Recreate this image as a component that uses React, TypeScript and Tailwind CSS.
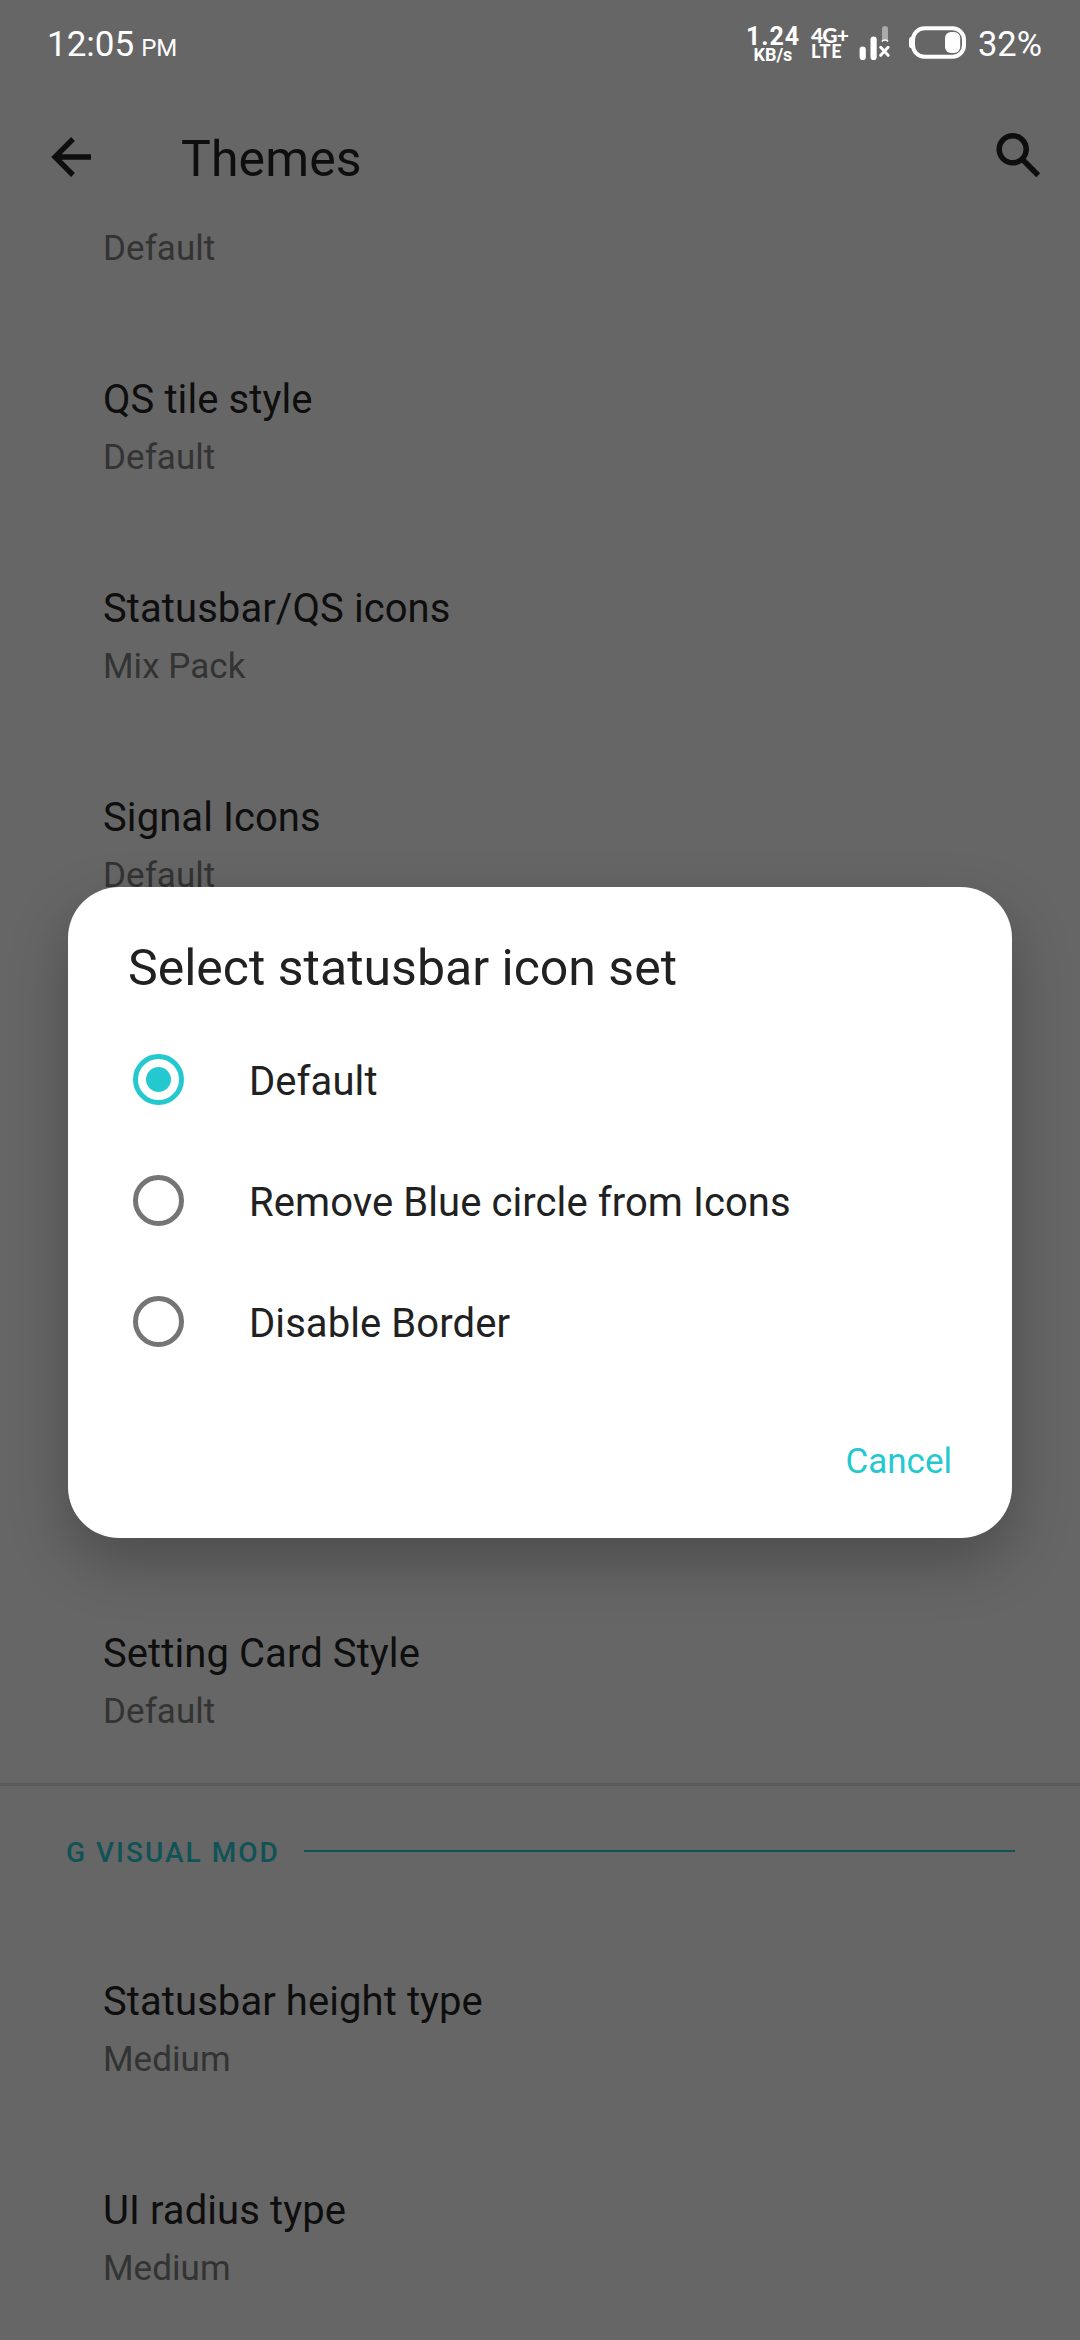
import React from "react";

type Setting = { title: string; value: string };

const upper: Setting[] = [
  { title: "QS tile style", value: "Default" },
  { title: "Statusbar/QS icons", value: "Mix Pack" },
  { title: "Signal Icons", value: "Default" },
];

const lower: Setting[] = [
  { title: "Statusbar height type", value: "Medium" },
  { title: "UI radius type", value: "Medium" },
];

const options = ["Default", "Remove Blue circle from Icons", "Disable Border"];

function Row({ title, value }: Setting) {
  return (
    <li className="h-[209px] pt-[53px] pl-[103px]">
      <div className="text-[40px] leading-[48px] tracking-[0.08px] text-[#0e0e0e]">{title}</div>
      <div className="mt-[13px] text-[35px] leading-[42px] tracking-[0.05px] text-[#333333]">{value}</div>
    </li>
  );
}

function StatusBar() {
  return (
    <div className="flex h-[88px] items-start justify-between pl-[47px] pr-[38px] text-white">
      <div className="flex items-baseline pt-[24px] leading-[42px]">
        <span className="text-[35px]">12:05</span>
        <span className="ml-[7px] text-[24px]">PM</span>
      </div>
      <div className="flex items-start">
        <div className="mt-[24px] flex w-[52px] flex-col items-center font-bold">
          <span className="text-[25px] leading-[26px] tracking-[0.9px]">1.24</span>
          <span className="mt-[-3px] text-[18px] leading-[16px]">KB/s</span>
        </div>
        <div className="ml-[12px] mt-[26px] flex w-[42px] flex-col font-['Lato',sans-serif] font-black">
          <span className="text-[21px] leading-[18px] tracking-[-0.8px]">4G+</span>
          <span className="text-[18px] leading-[15px] tracking-[0.8px]">LTE</span>
        </div>
        <svg className="ml-[5px] mt-[24px] h-[38px] w-[34px]" viewBox="0 0 34 38" fill="none">
          <rect x="1.600" y="22.5" width="6.2" height="13.6" rx="3.1" fill="#fff" />
          <rect x="12.500" y="12.6" width="6.2" height="23.5" rx="3.1" fill="#fff" />
          <path d="M24 17.500V5a3 3 0 0 1 6 0v12.500c-1.500-1.300-4.500-1.300-6 0Z" fill="#aaa" />
          <path d="M24 17.500c1.200-2 4.800-2 6 0" stroke="#fff" strokeWidth="1.500" />
          <path d="m22.700 23.300 7.400 8m0-8-7.400 8" stroke="#fff" strokeWidth="3" strokeLinecap="round" />
        </svg>
        <svg className="ml-[17px] mt-[24px] h-[38px] w-[60px]" viewBox="0 0 60 38" fill="none">
          <rect x="4" y="4.200" width="51" height="28.600" rx="11.500" stroke="#fff" strokeWidth="4" />
          <path d="M2.500 13.500C-.5 13.500-.5 23.500 2.500 23.500Z" fill="#fff" stroke="#fff" strokeWidth="1.500" />
          <rect x="36" y="8" width="15.200" height="21" rx="6" fill="#fff" />
        </svg>
        <span className="ml-[9px] mt-[23px] text-[34.5px] leading-[42px]">32%</span>
      </div>
    </div>
  );
}

function Radio({ checked }: { checked: boolean }) {
  return checked ? (
    <span className="flex size-[51px] items-center justify-center rounded-full border-[5px] border-[#24c9d0]">
      <span className="size-[25px] rounded-full bg-[#24c9d0]" />
    </span>
  ) : (
    <span className="size-[51px] rounded-full border-[5px] border-[#757575]" />
  );
}

function Dialog() {
  return (
    <div className="absolute inset-0 px-[68px] pt-[887px]">
      <div
        role="dialog"
        className="flex h-[651px] flex-col rounded-[51px] bg-white text-[#212121] shadow-[0_24px_58px_rgba(0,0,0,0.26)]"
      >
        <h2 className="pl-[60px] pt-[51px] text-[50px] leading-[60px]">Select statusbar icon set</h2>
        <ul className="mt-[21px]">
          {options.map((label, i) => (
            <li key={label} className="flex h-[121px] items-center pl-[65px]">
              <Radio checked={i === 0} />
              <span className="ml-[65px] mt-[4px] text-[40px] leading-[48px] tracking-[0.08px]">{label}</span>
            </li>
          ))}
        </ul>
        <button className="mr-[60px] mt-[59px] self-end text-[35px] leading-[42px] text-[#24c9d0]">Cancel</button>
      </div>
    </div>
  );
}

export default function App() {
  return (
    <div className="relative h-[2340px] w-[1080px] overflow-hidden bg-[#666666] font-['Roboto',sans-serif]">
      <StatusBar />
      <header className="flex h-[132px] items-start">
        <svg className="ml-[39px] mt-[37px] size-[64px]" viewBox="0 0 24 24" fill="none" stroke="#0e0e0e" strokeWidth="2">
          <path d="M19.500 12H7M12.750 5.250 6 12l6.750 6.750" />
        </svg>
        <h1 className="ml-[78px] mt-[41px] text-[50px] leading-[60px] tracking-[0.1px] text-[#0e0e0e]">Themes</h1>
        <svg className="ml-auto mr-[31px] mt-[36px] size-[62px]" viewBox="0 0 62 62" fill="none" stroke="#0e0e0e">
          <circle cx="25.700" cy="25.300" r="13.500" strokeWidth="5.500" />
          <path d="M34.500 34.500 51.200 51.200" strokeWidth="5.500" />
        </svg>
      </header>
      <div className="h-[103px] pl-[103px] pt-[8px] text-[35px] leading-[42px] tracking-[0.05px] text-[#333333]">Default</div>
      <ul>
        {upper.map((s) => (
          <Row key={s.title} {...s} />
        ))}
      </ul>
      <ul className="mt-[627px]">
        <Row title="Setting Card Style" value="Default" />
      </ul>
      <div className="mt-[-3px] h-[3px] bg-[#5a5a5a]" />
      <div className="flex h-[139px] items-start pl-[66px] pr-[65px] pt-[50px]">
        <span className="text-[28px] font-medium leading-[34px] tracking-[2px] text-[#0f5356]">G VISUAL MOD</span>
        <span className="ml-[24px] mt-[14px] h-[2px] flex-1 bg-[#0f5356]" />
      </div>
      <ul>
        {lower.map((s) => (
          <Row key={s.title} {...s} />
        ))}
      </ul>
      <Dialog />
    </div>
  );
}
